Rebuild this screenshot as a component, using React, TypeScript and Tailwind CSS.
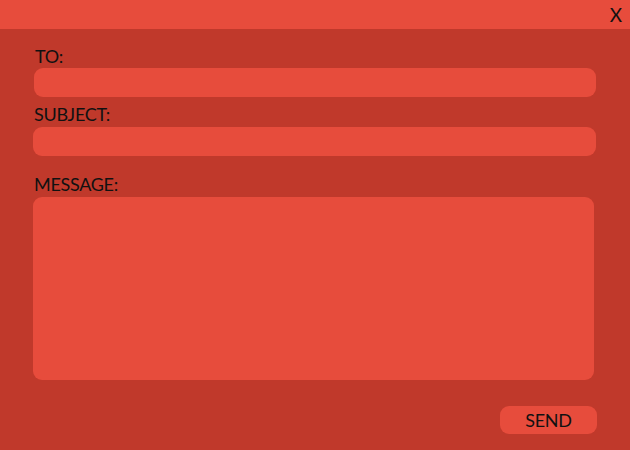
export default function App() {
  const font = { fontFamily: "Lato, 'Open Sans', sans-serif" };
  return (
    <div className="w-[630px] h-[450px] bg-[#c0392b] flex flex-col text-[#111]" style={font}>
      <div className="h-[29px] bg-[#e74c3c] flex items-center justify-end pr-[8px]">
        <span className="text-[19px] leading-none">X</span>
      </div>
      <div className="flex flex-col pl-[34px] pr-[34px] pt-[16px] tracking-[-0.3px]">
        <label className="text-[18px] leading-[22px] pl-[1px]">TO:</label>
        <div className="mt-[1px] h-[29px] bg-[#e74c3c] rounded-[9px]" />
        <label className="mt-[6px] text-[18px] leading-[22px]">SUBJECT:</label>
        <div className="mt-[2px] h-[29px] bg-[#e74c3c] rounded-[9px] -ml-[1px]" />
        <label className="mt-[17px] text-[18px] leading-[22px]">MESSAGE:</label>
        <div className="mt-[2px] h-[183px] bg-[#e74c3c] rounded-[9px] -ml-[1px] mr-[2px]" />
        <div className="flex justify-end mt-[26px] -mr-[1px]">
          <button className="w-[97px] h-[28px] bg-[#e74c3c] rounded-[9px] text-[18px] leading-none flex items-center justify-center">
            SEND
          </button>
        </div>
      </div>
    </div>
  );
}
